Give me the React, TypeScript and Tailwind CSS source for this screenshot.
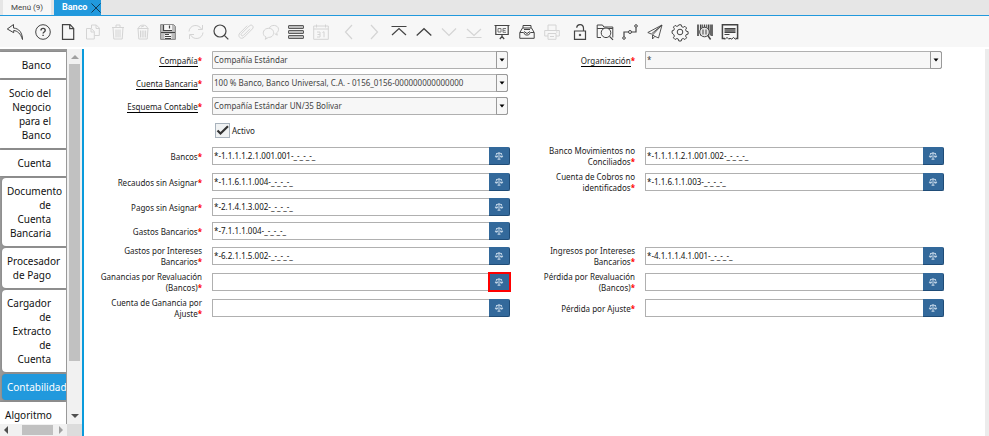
import type { ReactNode } from "react";
import clsx from "clsx";

type Tool = { label: string; off?: boolean; icon: ReactNode };

type Field = {
  id: string;
  label: string;
  value: string;
  kind: "select" | "account" | "check";
  marked?: boolean;
};

// Iconos de la barra, dibujados en una caja de 16x16
const toolGroups: Tool[][] = [
  [
    {
      label: "Deshacer",
      icon: <path d="M6.500 .5 .3 5l6.400 3.700V6.500c3.500.3 7 3 8.800 9-.2-7-3.500-11-9-11.500Z" />,
    },
  ],
  [
    {
      label: "Ayuda",
      icon: (
        <>
          <circle cx="8" cy="8" r="7.300" />
          <path d="M6 6.400c0-2.700 4.200-2.700 4.200 0 0 1.600-2.100 1.500-2.100 3.200M8.100 10.800v1.300" strokeWidth="1.4" />
        </>
      ),
    },
    {
      label: "Nuevo",
      icon: <path d="M2.500 .7h7.600l3.600 3.700v10.900H2.500ZM9.700 .7v4h4" strokeWidth="1.2" />,
    },
    {
      label: "Copiar",
      off: true,
      icon: <path d="M6.500 4V1h4.800l3 3v7.500H9.500M11 1v3.500h3.300M1.500 4.500h4.800l3 3v7.500H1.500ZM6 4.500v3.500h3.300" />,
    },
    {
      label: "Eliminar",
      off: true,
      icon: <path d="M2 3.500h12M6 3.500v-2.500h4v2.500M3 3.500l.8 11.500h8.400l.8-11.500M6 5.500v8M8 5.500v8M10 5.500v8" />,
    },
    {
      label: "Eliminar selección",
      off: true,
      icon: (
        <path d="M2.500 4.500h11M3.500 4.500c0-4.500 9-4.500 9 0M3 4.500l.8 10.500h8.400l.8-10.500M5.500 6.500v7M7.200 6.500v7M8.900 6.500v7M10.600 6.500v7M6 3l3-1" />
      ),
    },
    {
      label: "Guardar",
      icon: (
        <>
          <path d="M.6 .6h13l1.800 1.800v13H.6Z" fill="#bdbdbd" stroke="#888" />
          <path d="M3.500 1h8.500v5.500H3.500ZM4.500 10h7v5h-7Z" fill="#f7f7f7" stroke="none" />
          <path d="M3.500 1v5.500h8.500M9.500 1.500v3M1 8.500h14M5 10.500h4M5 12.500h6M5 14.500h6" strokeWidth="1.200" />
        </>
      ),
    },
  ],
  [
    {
      label: "Refrescar",
      off: true,
      icon: <path d="M1 7.500C1.500 1 10 -.8 13.500 5M14.500 1v4.500H10M15 8.500C14.500 15 6 16.800 2.500 11M1.500 15v-4.500H6" />,
    },
    {
      label: "Buscar",
      icon: (
        <>
          <circle cx="7" cy="7" r="6" strokeWidth="1.200" />
          <path d="m11.300 11.300 4 4" strokeWidth="1.200" />
        </>
      ),
    },
    {
      label: "Adjunto",
      off: true,
      icon: <path d="m12 4.800-6.500 6.500c-1.500 1.500-3.200-.4-1.900-1.700l7.600-7.600c2.500-2.500 5.300.7 3.200 2.900l-8.200 8.200c-3.300 3.300-7.300-1-4.200-4.200l7.200-7.200" />,
    },
    {
      label: "Chat",
      off: true,
      icon: (
        <path d="M6.500 4C7.500.3 15.500.5 15.500 5.300c0 1.700-.8 2.800-1.800 3.500l.6 2.400-2.600-1.500M5.800 4.300c-6.700 0-6.900 7.500-2.700 8.700l-.9 2.300 3.300-1.900c6.500.3 7-9.100.3-9.100Z" />
      ),
    },
    {
      label: "Cuadrícula",
      icon: (
        <g fill="#bcbcbc" stroke="#5c5c5c">
          <rect x=".5" y="1.500" width="15" height="3" rx=".5" />
          <rect x=".5" y="6.500" width="15" height="3" rx=".5" />
          <rect x=".5" y="11.500" width="15" height="3" rx=".5" />
        </g>
      ),
    },
    {
      label: "Historial",
      off: true,
      icon: (
        <>
          <path d="M.7 2h14.600v13.300H.7ZM.7 5h14.600M3.500 .5v3M12.500 .5v3" />
          <path d="M4 8h3v5H4M4.500 10.500H7M9.500 8.500l1.500-.8V13.300" />
        </>
      ),
    },
  ],
  [
    { label: "Registro padre", off: true, icon: <path d="M11 1 4.500 8l6.500 7" strokeWidth="1.200" /> },
    { label: "Registro detalle", off: true, icon: <path d="m5 1 6.500 7L5 15" strokeWidth="1.200" /> },
    { label: "Primero", icon: <path d="M.5 2.500h15M1 11l7-6.500L15 11" strokeWidth="1.200" /> },
    { label: "Anterior", icon: <path d="m.7 11.500 7.300-6.800 7.300 6.800" strokeWidth="1.300" /> },
    { label: "Siguiente", off: true, icon: <path d="m1 4.500 7 7 7-7" strokeWidth="1.200" /> },
    { label: "Último", off: true, icon: <path d="m1 5 7 6.500L15 5M.5 13.500h15" strokeWidth="1.200" /> },
  ],
  [
    {
      label: "Informe",
      icon: (
        <>
          <path d="M.5 1.500h15M1.800 2v8.500h12.400V2M8 10.500v2.500M8 12.500l-2.200 2.500M8 12.500l2.200 2.500" strokeWidth="1.200" />
          <path d="M4 4.500h3v3.500H4ZM9 8.300V4.500h3M9 6.400h2.500M9 8.300h3" stroke="#777" />
        </>
      ),
    },
    {
      label: "Archivo",
      icon: (
        <>
          <path d="M.8 8.500 3.500 4h9l2.700 4.500v5.800H.8ZM4 4V1.500h8V4M1 8.500h3.500l2 2.500h3l2-2.500H15" />
          <path d="M5 5.500h6M5 7.500l3 2 3-2" />
        </>
      ),
    },
    {
      label: "Imprimir",
      off: true,
      icon: <path d="M4 6V1h8v5M4 12H.7V6.500h14.600V12H12M4 9.500h8v5.800H4ZM12 8h1.500M6 12.500h4" />,
    },
  ],
  [
    {
      label: "Bloqueo",
      icon: (
        <>
          <path d="M2.500 7h11v8.300h-11ZM11.500 7V4.500c0-5-6.500-5-6.800-.8" strokeWidth="1.200" />
          <circle cx="8" cy="11" r=".8" fill="currentColor" />
        </>
      ),
    },
    {
      label: "Zoom",
      icon: (
        <>
          <path d="M4 13.500H.2V1h5.300l1.300 2h9v10.500M.2 4.500h15.600" />
          <circle cx="9" cy="8.800" r="4.800" fill="#f7f7f7" />
          <path d="m12.500 12.300 3.500 3.500" strokeWidth="1.200" />
        </>
      ),
    },
    {
      label: "Flujo de trabajo",
      icon: (
        <>
          <circle cx="2" cy="14" r="1.300" />
          <circle cx="8" cy="8" r="1.500" />
          <circle cx="14" cy="2" r="1.300" />
          <path d="M2 12.500V8h4.500M9.500 8H14V3.500" strokeWidth="1.200" />
        </>
      ),
    },
    {
      label: "Solicitud",
      icon: <path d="M15 1 .8 8.500l3.500 1.500L15 1 5.500 11v4l2.300-2.700 3.700 1.700ZM5.500 11l2.300 1.300" strokeWidth=".9" />,
    },
    {
      label: "Proceso",
      icon: (
        <>
          <path d="M6.800.8h2.400l.5 1.900 1.500.6 1.700-1 1.700 1.700-1 1.700.6 1.500 1.900.5v2.400l-1.900.5-.6 1.500 1 1.700-1.700 1.700-1.700-1-1.500.6-.5 1.900H6.800l-.5-1.900-1.500-.6-1.700 1-1.700-1.700 1-1.700-.6-1.500L.1 9.200V6.800l1.700-.5.6-1.500-1-1.700 1.700-1.700 1.700 1 1.500-.6Z" />
          <circle cx="8" cy="8" r="2.800" />
        </>
      ),
    },
    {
      label: "Producto",
      icon: (
        <>
          <path d="M1 .5v11.500M3.700 .5v11M11.500 .5v11M15 .5v11.500" strokeWidth="1.600" />
          <path d="M5.700 .5v4M7.500 .5v4M9.300 .5v4M13.300 .5v11" />
          <circle cx="7.500" cy="8" r="4.800" fill="#e4e4e4" />
          <path d="M6 5.500v5M9 5.500v5" />
          <path d="m10.800 11.500 2.800 4" strokeWidth="1.400" />
        </>
      ),
    },
    {
      label: "Personalizar",
      icon: (
        <>
          <path d="M3 14.500H.4V.8h15.200v13.700H13.500" strokeWidth="1.500" />
          <path d="M2.500 4.500h11M2.500 8.500h11M2.500 10.500h5" />
          <path d="M2.500 6.500h11" stroke="#777" strokeWidth="3" />
          <path d="m3 15.500 2-2.200 2 2.200M9.500 15.500l2-2.200 2 2.200M7 14.500h2.500" />
        </>
      ),
    },
  ],
];

const sideTabs = [
  { name: "Banco", level: 0 },
  { name: "Socio del Negocio para el Banco", level: 0 },
  { name: "Cuenta", level: 0 },
  { name: "Documento de Cuenta Bancaria", level: 1 },
  { name: "Procesador de Pago", level: 1 },
  { name: "Cargador de Extracto de Cuenta", level: 1 },
  { name: "Contabilidad", level: 1, active: true },
  { name: "Algoritmo", level: 0 },
];

const rows: [Field, Field?][] = [
  [
    { id: "compania", label: "Compañía", value: "Compañía Estándar", kind: "select" },
    { id: "organizacion", label: "Organización", value: "*", kind: "select" },
  ],
  [
    {
      id: "cuenta",
      label: "Cuenta Bancaria",
      value: "100 % Banco, Banco Universal, C.A. - 0156_0156-000000000000000",
      kind: "select",
    },
  ],
  [{ id: "esquema", label: "Esquema Contable", value: "Compañía Estándar UN/35 Bolivar", kind: "select" }],
  [{ id: "activo", label: "Activo", value: "", kind: "check" }],
  [
    { id: "bancos", label: "Bancos", value: "*-1.1.1.1.2.1.001.001-_-_-_-_", kind: "account" },
    { id: "movimientos", label: "Banco Movimientos no Conciliados", value: "*-1.1.1.1.2.1.001.002-_-_-_-_", kind: "account" },
  ],
  [
    { id: "recaudos", label: "Recaudos sin Asignar", value: "*-1.1.6.1.1.004-_-_-_-_", kind: "account" },
    { id: "cobros", label: "Cuenta de Cobros no identificados", value: "*-1.1.6.1.1.003-_-_-_-_", kind: "account" },
  ],
  [{ id: "pagos", label: "Pagos sin Asignar", value: "*-2.1.4.1.3.002-_-_-_-_", kind: "account" }],
  [{ id: "gastos", label: "Gastos Bancarios", value: "*-7.1.1.1.004-_-_-_-_", kind: "account" }],
  [
    { id: "gastosInt", label: "Gastos por Intereses Bancarios", value: "*-6.2.1.1.5.002-_-_-_-_", kind: "account" },
    { id: "ingresosInt", label: "Ingresos por Intereses Bancarios", value: "*-4.1.1.1.4.1.001-_-_-_-_", kind: "account" },
  ],
  [
    { id: "ganancias", label: "Ganancias por Revaluación (Bancos)", value: "", kind: "account", marked: true },
    { id: "perdida", label: "Pérdida por Revaluación (Bancos)", value: "", kind: "account" },
  ],
  [
    { id: "gananciaAj", label: "Cuenta de Ganancia por Ajuste", value: "", kind: "account" },
    { id: "perdidaAj", label: "Pérdida por Ajuste", value: "", kind: "account" },
  ],
];

function ToolButton({ label, off, icon }: Tool) {
  return (
    <button
      type="button"
      aria-label={label}
      disabled={off}
      className={clsx("flex w-[25px] shrink-0 justify-center", off ? "text-[#d4d4d4]" : "text-[#444]")}
    >
      <svg viewBox="0 0 16 16" className="size-4 overflow-visible" fill="none" stroke="currentColor">
        {icon}
      </svg>
    </button>
  );
}

function Arrow({ d, className }: { d: string; className: string }) {
  return (
    <svg viewBox="0 0 8 8" className={clsx("size-2 shrink-0", className)} fill="currentColor">
      <path d={d} />
    </svg>
  );
}

function FieldLabel({ field }: { field: Field }) {
  return (
    <label htmlFor={field.id} className="pr-[10px] pl-3 text-right text-[8px] leading-[11px] text-[#222]">
      <span className={clsx(field.kind === "select" && "border-b border-black")}>{field.label}</span>
      <span className="font-bold text-[#f00]">*</span>
    </label>
  );
}

function FieldControl({ field }: { field: Field }) {
  if (field.kind === "select") {
    return (
      <div className="relative mr-[2px] h-[18px]">
        <select
          id={field.id}
          className="block h-full w-full appearance-none rounded-r-[2px] border border-[#b0b0b0] bg-[#f7f7f7] pr-3 pl-[1px] text-[8px] leading-4 text-[#444]"
        >
          <option>{field.value}</option>
        </select>
        <span className="pointer-events-none absolute inset-y-0 right-0 flex w-3 items-center justify-center rounded-r-[2px] border border-[#9a9a9a]">
          <Arrow d="M1.500 2.500h5L4 5.500Z" className="text-black" />
        </span>
      </div>
    );
  }

  return (
    <div className="flex h-[18px]">
      <input
        id={field.id}
        defaultValue={field.value}
        className="min-w-0 flex-1 border border-r-0 border-[#b0b0b0] bg-white pl-[1px] text-[8px] text-[#111]"
      />
      <button
        type="button"
        aria-label={`Combinación contable: ${field.label}`}
        className={clsx(
          "flex w-[21px] items-center justify-center border-r border-b border-[#1f4c77] bg-[#33699b] text-[#d5e3f0]",
          field.marked ? "outline-2 -outline-offset-1 outline-[#f00]" : "rounded-r-[2px]"
        )}
      >
        <svg viewBox="0 0 10 8" className="h-2 w-[10px]" fill="none" stroke="currentColor">
          <path d="M5 .3v7M3.500 7.200h3M2 1.700 5 1l3 .7" strokeWidth=".9" />
          <path d="M2.500 2 1.300 4.500h2.400ZM7.500 2 6.300 4.500h2.400Z" strokeWidth=".5" />
          <path d="M1 4.300h3c-.4 1.700-2.600 1.700-3 0ZM6 4.300h3c-.4 1.700-2.600 1.700-3 0Z" fill="currentColor" stroke="none" />
        </svg>
      </button>
    </div>
  );
}

function CheckControl({ field }: { field: Field }) {
  return (
    <div className="col-start-2 flex h-[25px] items-center gap-[2px] pl-[3px]">
      <span className="relative size-[15px]">
        <input
          id={field.id}
          type="checkbox"
          defaultChecked
          className="block size-full appearance-none border border-[#a8b2bc] bg-[#f0f2f3]"
        />
        <svg viewBox="0 0 15 15" className="pointer-events-none absolute inset-0" fill="none" stroke="#333" strokeWidth="2.200">
          <path d="m2.500 7.500 3 3L13 3.200" />
        </svg>
      </span>
      <label htmlFor={field.id} className="text-[8px] leading-[11px] text-[#222]">
        {field.label}
      </label>
    </div>
  );
}

function FormRow({ row }: { row: [Field, Field?] }) {
  const [left, right] = row;
  const isSelect = left.kind === "select";
  return (
    <div
      className={clsx(
        "grid grid-cols-[minmax(0,128fr)_minmax(0,298fr)_minmax(0,135fr)_minmax(0,299fr)_minmax(0,41fr)] items-center",
        isSelect && "pt-[2px] pb-[3px]",
        left.kind === "account" && (right ? "min-h-[26px]" : "min-h-6")
      )}
    >
      {left.kind === "check" ? (
        <CheckControl field={left} />
      ) : (
        <>
          <FieldLabel field={left} />
          <FieldControl field={left} />
        </>
      )}
      {right && (
        <>
          <FieldLabel field={right} />
          <FieldControl field={right} />
        </>
      )}
    </div>
  );
}

function Sidebar() {
  return (
    <aside className="flex w-[84px] shrink-0 flex-col border-r-2 border-[#0a9bdc]">
      <div className="flex min-h-0 flex-1">
        <nav className="flex w-[67px] flex-col gap-[2px] overflow-hidden border-r border-[#999] bg-[#999] pt-[3px]">
          {sideTabs.map((tab) => (
            <a
              key={tab.name}
              href="#"
              className={clsx(
                "block shrink-0 py-[6px] pr-[15px] pl-[5px] text-right text-[10px] leading-[14px] shadow-[0_0_2px_#777]",
                tab.level === 1 && "ml-[2px] rounded-l-[4px]",
                tab.active ? "bg-[#2199dd] text-white" : "bg-white text-[#111]"
              )}
            >
              {tab.name}
            </a>
          ))}
        </nav>
        <div className="flex flex-1 flex-col items-center bg-[#f1f1f1] pt-1 pb-1">
          <Arrow d="M0 6h8L4 2Z" className="text-[#a0a0a0]" />
          <div className="mt-[3px] w-[11px] flex-1 bg-[#c1c1c1]" />
          <div className="h-[51px]" />
          <Arrow d="M0 2h8L4 6Z" className="text-[#505050]" />
        </div>
      </div>
      <div className="flex h-3">
        <div className="flex w-[67px] items-center bg-[#f1f1f1] px-[2px]">
          <Arrow d="M6 0v8L2 4Z" className="text-[#505050]" />
          <div className="mr-1 ml-auto h-[10px] w-[31px] bg-[#c1c1c1]" />
          <Arrow d="M2 0v8l4-4Z" className="text-[#a0a0a0]" />
        </div>
        <div className="flex-1 bg-[#dcdcdc]" />
      </div>
    </aside>
  );
}

export default function App() {
  return (
    <div className="flex h-screen flex-col overflow-hidden bg-white font-['Noto_Sans',sans-serif]">
      <div className="flex h-4 shrink-0 gap-[3px] border-b border-[#2199dd] bg-[#e6e6e6] pl-[3px] font-['Roboto',sans-serif]">
        <button type="button" className="bg-[#f7f7f7] px-2 text-[8px] text-[#444]">
          Menú (9)
        </button>
        <div className="flex items-center bg-[#2199dd] pl-2">
          <button type="button" className="text-[9px] font-bold text-white">
            Banco
          </button>
          <button type="button" aria-label="Cerrar Banco" className="pl-1">
            <svg viewBox="0 0 10 10" className="size-[10px]" fill="none" stroke="#123a55">
              <path d="m.5.5 9 9M9.500.5l-9 9" />
            </svg>
          </button>
        </div>
      </div>

      {/* Barra de herramientas */}
      <div className="flex h-[31px] shrink-0 items-center gap-[3px] bg-[#f7f7f7] pl-[2px]">
        {toolGroups.map((group, i) => (
          <div key={i} className="flex">
            {group.map((tool) => (
              <ToolButton key={tool.label} {...tool} />
            ))}
          </div>
        ))}
      </div>

      <div className="flex min-h-0 flex-1 pt-[2px]">
        <Sidebar />
        <form className="min-w-0 flex-1">
          {rows.map((row) => (
            <FormRow key={row[0].id} row={row} />
          ))}
        </form>
        <div className="w-1 shrink-0 bg-[#ececec]" />
      </div>
    </div>
  );
}
